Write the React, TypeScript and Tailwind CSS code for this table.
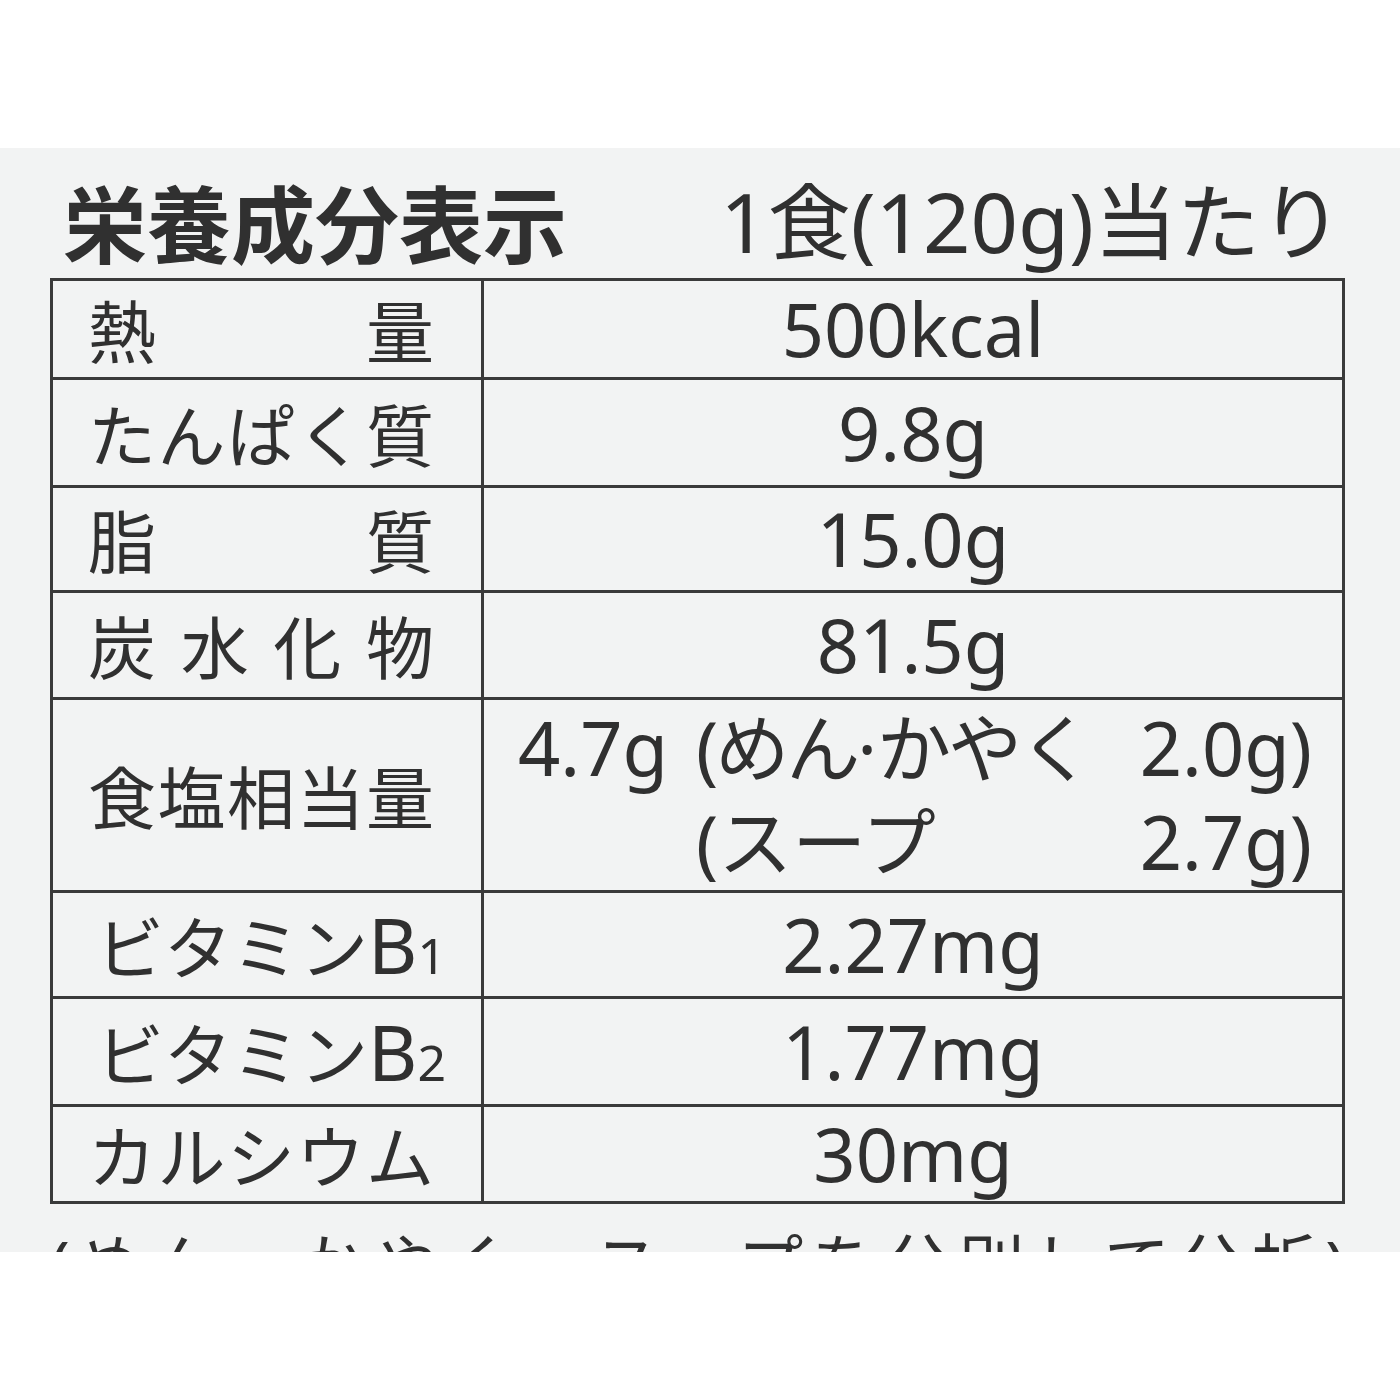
import React from 'react';

type Row = {
  label: React.ReactNode;
  justify?: boolean;
  value: React.ReactNode;
  height: string;
};

const rows: Row[] = [
  { label: '熱量', justify: true, value: '500kcal', height: 'h-[99px]' },
  { label: 'たんぱく質', justify: true, value: '9.8g', height: 'h-[108px]' },
  { label: '脂質', justify: true, value: '15.0g', height: 'h-[105px]' },
  { label: '炭水化物', justify: true, value: '81.5g', height: 'h-[107px]' },
  { label: '食塩相当量', justify: true, value: 'salt', height: 'h-[193px]' },
  {
    label: (
      <>
        ビタミン<span className="font-['Noto_Sans',sans-serif] text-[76px]">B</span>
        <span className="font-['Noto_Sans',sans-serif] text-[50px]">1</span>
      </>
    ),
    value: '2.27mg',
    height: 'h-[106px]',
  },
  {
    label: (
      <>
        ビタミン<span className="font-['Noto_Sans',sans-serif] text-[76px]">B</span>
        <span className="font-['Noto_Sans',sans-serif] text-[50px]">2</span>
      </>
    ),
    value: '1.77mg',
    height: 'h-[108px]',
  },
  { label: 'カルシウム', justify: true, value: '30mg', height: 'h-[94px]' },
];

function SaltValue() {
  return (
    <div className="grid w-full grid-cols-[178px_1fr_auto] whitespace-nowrap pl-[34px] pr-[30px] text-[74px] leading-[94px]">
      <span>4.7g</span>
      <span className="tracking-[-3px]">
        (めん<span className="tracking-normal">·</span>かやく
      </span>
      <span className="text-right">2.0g)</span>
      <span />
      <span>(スープ</span>
      <span className="text-right">2.7g)</span>
    </div>
  );
}

export default function App() {
  return (
    <div className="flex h-[1400px] w-[1400px] flex-col bg-white text-[#303030]">
      <div className="h-[148px] shrink-0 bg-white" />
      <div className="h-[1104px] shrink-0 overflow-hidden bg-[#f2f3f3] pl-[50px] pr-[55px]">
        {/* header */}
        <div className="flex items-start justify-between pt-[31px] pl-[13px] pr-[2px]">
          <h1 className="font-['Noto_Sans_CJK_JP',sans-serif] text-[84px] font-semibold leading-none">栄養成分表示</h1>
          <div className="font-['Noto_Sans','Noto_Sans_CJK_JP',sans-serif] text-[83px] leading-none">1食(120g)当たり</div>
        </div>

        {/* table */}
        <div className="mt-[15px] border-[3px] border-[#3a3a3a]">
          {rows.map((row, i) => (
            <div
              key={i}
              className={`flex ${row.height} ${i < rows.length - 1 ? 'border-b-[3px] border-[#3a3a3a]' : ''}`}
            >
              <div className="flex w-[431px] shrink-0 items-center border-r-[3px] border-[#3a3a3a] pl-[35px]">
                <div
                  className={`w-[346px] whitespace-nowrap font-['Noto_Sans_CJK_JP',sans-serif] text-[68px] leading-none ${
                    row.justify ? 'text-justify [text-align-last:justify]' : 'pl-[8px]'
                  }`}
                >
                  {row.label}
                </div>
              </div>
              <div className="flex flex-1 items-center justify-center font-['Noto_Sans','Noto_Sans_CJK_JP',sans-serif]">
                {row.value === 'salt' ? (
                  <SaltValue />
                ) : (
                  <span className="text-[74px] leading-none">{row.value}</span>
                )}
              </div>
            </div>
          ))}
        </div>

        {/* note, cut off by the bottom edge of the label */}
        <div className="mt-[26px] w-[1295px] whitespace-nowrap text-justify font-['Noto_Sans','Noto_Sans_CJK_JP',sans-serif] text-[66px] leading-none [text-align-last:justify]">
          (めん・かやく、スープを分別して分析)
        </div>
      </div>
      <div className="flex-1 bg-white" />
    </div>
  );
}
